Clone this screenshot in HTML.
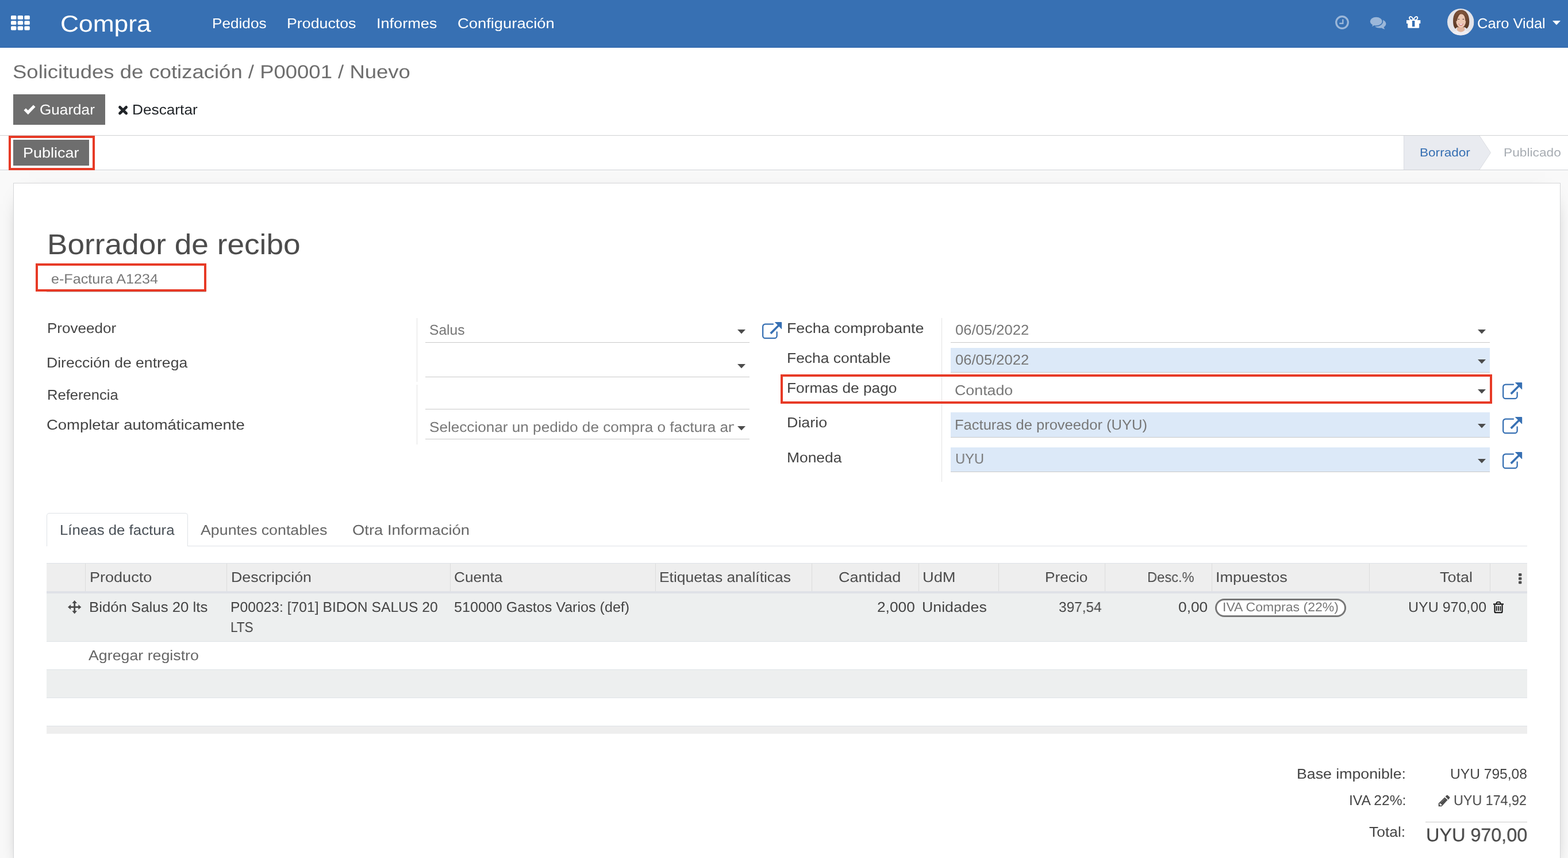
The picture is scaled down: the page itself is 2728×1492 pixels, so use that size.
<!DOCTYPE html>
<html lang="es"><head><meta charset="utf-8"><title>Compra - Borrador de recibo</title><style>
html,body{margin:0;padding:0;background:#fff}
body{width:2728px;height:1492px;overflow:hidden;position:relative;font-family:"Liberation Sans", sans-serif}
.b{position:absolute;display:block;margin:0;padding:0}
.t{position:absolute;display:block;margin:0;padding:0;white-space:pre;font-weight:400;text-decoration:none;font-family:"Liberation Sans", sans-serif;transform-origin:0 0;will-change:transform;text-rendering:geometricPrecision}
svg{overflow:visible}
</style></head>
<body>
<nav class="b" style="left:0;top:0;width:2728px;height:82px;background:#3770b3;border-bottom:1px solid #2861aa"><svg class="b" style="left:19.2px;top:26.6px" width="33" height="25.6" viewBox="0 0 33 25.600" ><rect x="0" y="0" width="9.4" height="6.800" rx="1.6" fill="#fff"/><rect x="11.7" y="0" width="9.4" height="6.800" rx="1.6" fill="#fff"/><rect x="23.4" y="0" width="9.4" height="6.800" rx="1.6" fill="#fff"/><rect x="0" y="9.3" width="9.4" height="6.800" rx="1.6" fill="#fff"/><rect x="11.7" y="9.3" width="9.4" height="6.800" rx="1.6" fill="#fff"/><rect x="23.4" y="9.3" width="9.4" height="6.800" rx="1.6" fill="#fff"/><rect x="0" y="18.6" width="9.4" height="6.800" rx="1.6" fill="#fff"/><rect x="11.7" y="18.6" width="9.4" height="6.800" rx="1.6" fill="#fff"/><rect x="23.4" y="18.6" width="9.4" height="6.800" rx="1.6" fill="#fff"/></svg><svg class="b" style="left:2322.8px;top:26.8px" width="24" height="24" viewBox="0 0 24 24" ><circle cx="12" cy="12" r="10.300" fill="none" stroke="#9bb7d9" stroke-width="3.2"/><path d="M13.300 6.500v7.300h-6" fill="none" stroke="#9bb7d9" stroke-width="2.400"/></svg><svg class="b" style="left:2382.6px;top:28.8px" width="28.4" height="22.2" viewBox="0 0 28.400 22.200" ><path d="M17.500 4.700c6 0 10.900 3.400 10.900 7.600 0 2.400-1.500 4.500-3.900 5.900.4 1.300 1.100 2.500 2.100 3.600-2.200-.3-4.200-1.100-5.800-2.400-1.100.3-2.200.4-3.300.4-6 0-10.900-3.400-10.900-7.500s4.900-7.600 10.900-7.600z" fill="#9bb7d9"/><path d="M11.250 0c6.200 0 11.250 3.600 11.250 8.100s-5.050 8.100-11.250 8.100c-1.100 0-2.200-.1-3.200-.3-1.700 1.200-3.700 2-5.900 2.200 1-1 1.700-2.200 2.100-3.500C1.600 13.100 0 10.700 0 8.100 0 3.600 5.050 0 11.250 0z" fill="#9bb7d9" stroke="#3770b3" stroke-width="1.500"/></svg><svg class="b" style="left:2446.8px;top:28px" width="24.3" height="20.7" viewBox="0 0 24.300 20.700" ><path d="M0 7h24.300v5.900H0z" fill="#fff"/><path d="M2.200 11h19.900v8.500q0 1.200-1.200 1.200H3.400q-1.200 0-1.200-1.200z" fill="#fff"/><path d="M9.900 7.800h4.500v10.600H9.900z" fill="#3770b3"/><path d="M12.150 7C10.500 2.500 8.300 .6 6.400 1.200 4.300 1.900 4.600 5.800 7.800 7zM12.150 7C13.800 2.500 16 .6 17.900 1.200c2.100.7 1.800 4.600-1.400 5.800z" fill="none" stroke="#fff" stroke-width="1.900"/></svg><svg class="b" style="left:2701px;top:36.2px" width="14" height="7.5" viewBox="0 0 14 7.5" ><path d="M0 0h14l-7 7.5z" fill="#fff"/></svg><svg class="b" style="left:2517.8px;top:15.4px" width="46.5" height="46.5" viewBox="0 0 46.500 46.500" ><defs><clipPath id="av"><circle cx="23.250" cy="23.250" r="23.250"/></clipPath><filter id="avb" x="-10%" y="-10%" width="120%" height="120%"><feGaussianBlur stdDeviation="0.55"/></filter><radialGradient id="avh" cx="50%" cy="30%" r="70%"><stop offset="0" stop-color="#8a5e42"/><stop offset="1" stop-color="#5d3a27"/></radialGradient></defs><g clip-path="url(#av)"><rect width="46.500" height="46.500" fill="#e4e4e9"/><g filter="url(#avb)"><path d="M6 47.500c1-5.500 5-8.500 11.500-10l12.500-.2c6 1.400 10 4.500 11 10.200z" fill="#efedf1"/><path d="M17.300 30l-.5 7.800q6.700 5.800 13.500 0L29.700 30z" fill="#dfb49d"/><path d="M10.200 25C9.200 12 13.800 2.200 24 2.200c9 0 14.800 8.500 14.200 21.800-.2 5-1.700 8.800-4.400 10.800l-3.300-2.600H17l-3 2.800c-2.300-2.300-3.500-6-3.800-10z" fill="url(#avh)"/><ellipse cx="23.800" cy="21.300" rx="8.500" ry="11.800" fill="#ecc8b3"/><path d="M14.700 22c-.3-8 2.500-13.500 10.300-14.600-3.600 2.200-6.700 6-8.200 14z" fill="#6e4630"/><path d="M33 22c.4-7.500-2-12.800-8-14.600 3.700 1.600 6 6 6.400 14.200z" fill="#6e4630"/><ellipse cx="19.800" cy="18.400" rx="1.600" ry=".7" fill="#5b4338"/><ellipse cx="27.900" cy="18.400" rx="1.600" ry=".7" fill="#5b4338"/><path d="M19.400 25.800q4.300 1 8.600 0-1.300 4-4.300 4t-4.300-4z" fill="#c96a6e"/><path d="M20.300 26.200q3.400.8 6.800 0-1.200 2.200-3.400 2.200t-3.400-2.200z" fill="#fff"/></g></g></svg><a class="t" style="left:105.3px;top:22.0px;font-size:40px;line-height:40px;transform:scaleX(1.1086);color:#fff">Compra</a>
<a class="t" style="left:368.9px;top:30.0px;font-size:24.6px;line-height:24.6px;transform:scaleX(1.0637);color:#fff">Pedidos</a>
<a class="t" style="left:499.1px;top:30.0px;font-size:24.6px;line-height:24.6px;transform:scaleX(1.0878);color:#fff">Productos</a>
<a class="t" style="left:655.2px;top:30.0px;font-size:24.6px;line-height:24.6px;transform:scaleX(1.1009);color:#fff">Informes</a>
<a class="t" style="left:795.9px;top:30.0px;font-size:24.6px;line-height:24.6px;transform:scaleX(1.1123);color:#fff">Configuración</a>
<span class="t" style="left:2570.2px;top:30.0px;font-size:24.6px;line-height:24.6px;transform:scaleX(1.0386);color:#fff">Caro Vidal</span></nav>
<header class="b" style="left:0;top:83px;width:2728px;height:152px;background:#fff;border-bottom:1px solid #cfd1d4"></header><div class="b btn" style="left:23px;top:164px;width:160px;height:53px;background:#6e6e6e"></div><svg class="b" style="left:41px;top:181.2px" width="21" height="17" viewBox="0 0 21 17" ><path d="M2.200 9l5.600 5.600L18.800 3.200" fill="none" stroke="#fff" stroke-width="5"/></svg><svg class="b" style="left:206px;top:183.8px" width="16.2" height="15.4" viewBox="0 0 16.200 15.400" ><path d="M2.600 2.400l11 10.600M13.600 2.400l-11 10.600" fill="none" stroke="#212529" stroke-width="4.900" stroke-linecap="round"/></svg><span class="t" style="left:22.1px;top:109.0px;font-size:32.6px;line-height:32.6px;transform:scaleX(1.1204);color:#6e6e6e">Solicitudes de cotización / P00001 / Nuevo</span>
<span class="t" style="left:69.4px;top:180.0px;font-size:24.6px;line-height:24.6px;transform:scaleX(1.0623);color:#fff">Guardar</span>
<span class="t" style="left:229.6px;top:180.0px;font-size:24.6px;line-height:24.6px;transform:scaleX(1.0666);color:#212529">Descartar</span>
<section><div class="b" style="left:0px;top:236px;width:2728px;height:59px;background:#fff;border-bottom:1px solid #cfd1d6"></div><svg class="b" style="left:2442px;top:236px" width="152" height="59" viewBox="0 0 152 59" ><path d="M.5 0v59h131.500l19.500-29.500L132 0z" fill="#e9ebf0"/><path d="M.5 0v59M132 0l19.500 29.500L132 59" fill="none" stroke="#dadce1" stroke-width="1"/></svg><div class="b btn" style="left:23px;top:243px;width:132px;height:45px;background:#6e6e6e"></div><span class="t" style="left:39.6px;top:255.0px;font-size:24.6px;line-height:24.6px;transform:scaleX(1.0971);color:#fff">Publicar</span>
<span class="t" style="left:2470.4px;top:256.0px;font-size:20.3px;line-height:20.3px;transform:scaleX(1.1132);color:#3770b3">Borrador</span>
<span class="t" style="left:2615.5px;top:256.0px;font-size:20.3px;line-height:20.3px;transform:scaleX(1.1211);color:#a8adb3">Publicado</span></section>
<div class="b" style="left:0px;top:296px;width:2728px;height:1196px;background:#f9f9f9"></div><div class="b" style="left:23px;top:318px;width:2692px;height:1200px;background:#fff;border:1px solid #d5d6d8;box-shadow:0 9px 36px -27px #000;box-sizing:border-box"></div>
<main><div class="b" style="left:81px;top:507px;width:277px;height:1px;background:#c9c9c9"></div><div class="b" style="left:740px;top:595px;width:564px;height:1px;background:#c9c9c9"></div><div class="b" style="left:740px;top:655px;width:564px;height:1px;background:#c9c9c9"></div><div class="b" style="left:740px;top:711px;width:564px;height:1px;background:#c9c9c9"></div><div class="b" style="left:740px;top:763px;width:564px;height:1px;background:#c9c9c9"></div><div class="b" style="left:725px;top:553px;width:1px;height:111px;background:#e2e2e2"></div><div class="b" style="left:725px;top:669px;width:1px;height:104px;background:#e2e2e2"></div><svg class="b" style="left:1283px;top:573px" width="14" height="7.5" viewBox="0 0 14 7.5" ><path d="M0 0h14l-7 7.5z" fill="#4c4c4c"/></svg><svg class="b" style="left:1283px;top:633px" width="14" height="7.5" viewBox="0 0 14 7.5" ><path d="M0 0h14l-7 7.5z" fill="#4c4c4c"/></svg><svg class="b" style="left:1283px;top:741px" width="14" height="7.5" viewBox="0 0 14 7.5" ><path d="M0 0h14l-7 7.5z" fill="#4c4c4c"/></svg><svg class="b" style="left:1325.7px;top:560.4px" width="34.2" height="29.3" viewBox="0 0 34.2 29.3" ><path d="M19 3.650H5.400A4.250 4.250 0 0 0 1.150 7.900V23.900A4.250 4.250 0 0 0 5.400 28.150H21.400A4.250 4.250 0 0 0 25.650 23.900V17.500" fill="none" stroke="#3770b3" stroke-width="2.3" stroke-linecap="round"/><path d="M22.600 0H33.200Q34.200 0 34.200 1V11.600Q34.200 12.600 33.400 11.900L29.300 7.800L16 21.300L13.500 18.600L26.900 5.300L22.300 .8Q21.700 0 22.600 0z" fill="#3770b3"/></svg><div class="b" style="left:1638px;top:553px;width:1px;height:285px;background:#e2e2e2"></div><div class="b" style="left:1654px;top:595px;width:938px;height:1px;background:#c9c9c9"></div><div class="b" style="left:1654px;top:605px;width:938px;height:42px;background:#dce9f8;border-bottom:1px solid #c9c9c9"></div><div class="b" style="left:1654px;top:700px;width:938px;height:1px;background:#c9c9c9"></div><div class="b" style="left:1654px;top:717px;width:938px;height:43px;background:#dce9f8;border-bottom:1px solid #c9c9c9"></div><div class="b" style="left:1654px;top:778px;width:938px;height:42px;background:#dce9f8;border-bottom:1px solid #c9c9c9"></div><svg class="b" style="left:2571px;top:573px" width="14" height="7.5" viewBox="0 0 14 7.5" ><path d="M0 0h14l-7 7.5z" fill="#4c4c4c"/></svg><svg class="b" style="left:2571px;top:625px" width="14" height="7.5" viewBox="0 0 14 7.5" ><path d="M0 0h14l-7 7.5z" fill="#4c4c4c"/></svg><svg class="b" style="left:2571px;top:677px" width="14" height="7.5" viewBox="0 0 14 7.5" ><path d="M0 0h14l-7 7.5z" fill="#4c4c4c"/></svg><svg class="b" style="left:2571px;top:737px" width="14" height="7.5" viewBox="0 0 14 7.5" ><path d="M0 0h14l-7 7.5z" fill="#4c4c4c"/></svg><svg class="b" style="left:2571px;top:798px" width="14" height="7.5" viewBox="0 0 14 7.5" ><path d="M0 0h14l-7 7.5z" fill="#4c4c4c"/></svg><svg class="b" style="left:2613.5px;top:664.6px" width="34.2" height="29.3" viewBox="0 0 34.2 29.3" ><path d="M19 3.650H5.400A4.250 4.250 0 0 0 1.150 7.900V23.900A4.250 4.250 0 0 0 5.400 28.150H21.400A4.250 4.250 0 0 0 25.650 23.900V17.500" fill="none" stroke="#3770b3" stroke-width="2.3" stroke-linecap="round"/><path d="M22.600 0H33.200Q34.200 0 34.200 1V11.600Q34.200 12.600 33.400 11.900L29.300 7.800L16 21.300L13.500 18.600L26.900 5.300L22.300 .8Q21.700 0 22.600 0z" fill="#3770b3"/></svg><svg class="b" style="left:2613.5px;top:725px" width="34.2" height="29.3" viewBox="0 0 34.2 29.3" ><path d="M19 3.650H5.400A4.250 4.250 0 0 0 1.150 7.900V23.900A4.250 4.250 0 0 0 5.400 28.150H21.400A4.250 4.250 0 0 0 25.650 23.900V17.500" fill="none" stroke="#3770b3" stroke-width="2.3" stroke-linecap="round"/><path d="M22.600 0H33.200Q34.200 0 34.200 1V11.600Q34.200 12.600 33.400 11.900L29.300 7.800L16 21.300L13.500 18.600L26.900 5.300L22.300 .8Q21.700 0 22.600 0z" fill="#3770b3"/></svg><svg class="b" style="left:2613.5px;top:785.6px" width="34.2" height="29.3" viewBox="0 0 34.2 29.3" ><path d="M19 3.650H5.400A4.250 4.250 0 0 0 1.150 7.900V23.900A4.250 4.250 0 0 0 5.400 28.150H21.400A4.250 4.250 0 0 0 25.650 23.900V17.500" fill="none" stroke="#3770b3" stroke-width="2.3" stroke-linecap="round"/><path d="M22.600 0H33.200Q34.200 0 34.200 1V11.600Q34.200 12.600 33.400 11.900L29.300 7.800L16 21.300L13.500 18.600L26.900 5.300L22.300 .8Q21.700 0 22.600 0z" fill="#3770b3"/></svg><div class="b" style="left:748px;top:726px;width:529px;height:34px;overflow:hidden"><span class="t" style="left:-1.4px;top:6px;font-size:24.6px;line-height:24.6px;transform:scaleX(1.0625);color:#777">Seleccionar un pedido de compra o factura anterior</span></div><div class="b" style="left:81px;top:949px;width:2576px;height:1px;background:#dee2e6"></div><div class="b" style="left:81px;top:892px;width:246px;height:58px;background:#fff;border:1px solid #dee2e6;border-bottom:0;border-radius:5px 5px 0 0;box-sizing:border-box"></div><h1 class="t" style="left:81.6px;top:401.0px;font-size:49.8px;line-height:49.8px;transform:scaleX(1.0683);color:#4c4c4c">Borrador de recibo</h1>
<span class="t" style="left:88.5px;top:474.0px;font-size:23.8px;line-height:23.8px;transform:scaleX(1.0573);color:#777">e-Factura A1234</span>
<label class="t" style="left:81.5px;top:560.0px;font-size:24.6px;line-height:24.6px;transform:scaleX(1.0587);color:#444">Proveedor</label>
<label class="t" style="left:81.4px;top:620.0px;font-size:24.6px;line-height:24.6px;transform:scaleX(1.0805);color:#444">Dirección de entrega</label>
<label class="t" style="left:81.5px;top:676.0px;font-size:24.6px;line-height:24.6px;transform:scaleX(1.0403);color:#444">Referencia</label>
<label class="t" style="left:81.1px;top:728.0px;font-size:24.6px;line-height:24.6px;transform:scaleX(1.1159);color:#444">Completar automáticamente</label>
<label class="t" style="left:1369.2px;top:560.0px;font-size:24.6px;line-height:24.6px;transform:scaleX(1.0899);color:#444">Fecha comprobante</label>
<label class="t" style="left:1369.2px;top:612.0px;font-size:24.6px;line-height:24.6px;transform:scaleX(1.0741);color:#444">Fecha contable</label>
<label class="t" style="left:1369.2px;top:664.0px;font-size:24.6px;line-height:24.6px;transform:scaleX(1.0689);color:#444">Formas de pago</label>
<label class="t" style="left:1369.2px;top:724.0px;font-size:24.6px;line-height:24.6px;transform:scaleX(1.0922);color:#444">Diario</label>
<label class="t" style="left:1369.2px;top:785.0px;font-size:24.6px;line-height:24.6px;transform:scaleX(1.0738);color:#444">Moneda</label>
<span class="t" style="left:747.4px;top:563.0px;font-size:24.6px;line-height:24.6px;transform:scaleX(0.9954);color:#777">Salus</span>
<span class="t" style="left:1661.6px;top:563.0px;font-size:24.6px;line-height:24.6px;transform:scaleX(1.0420);color:#777">06/05/2022</span>
<span class="t" style="left:1661.6px;top:615.0px;font-size:24.6px;line-height:24.6px;transform:scaleX(1.0420);color:#777">06/05/2022</span>
<span class="t" style="left:1661.0px;top:668.0px;font-size:24.6px;line-height:24.6px;transform:scaleX(1.0890);color:#777">Contado</span>
<span class="t" style="left:1661.3px;top:728.0px;font-size:24.6px;line-height:24.6px;transform:scaleX(1.0383);color:#777">Facturas de proveedor (UYU)</span>
<span class="t" style="left:1661.6px;top:787.0px;font-size:24.6px;line-height:24.6px;transform:scaleX(0.9623);color:#777">UYU</span>
<a class="t" style="left:104.2px;top:911.0px;font-size:24.6px;line-height:24.6px;transform:scaleX(1.0501);color:#495057">Líneas de factura</a>
<a class="t" style="left:349.2px;top:911.0px;font-size:24.6px;line-height:24.6px;transform:scaleX(1.0890);color:#666">Apuntes contables</a>
<a class="t" style="left:613.1px;top:911.0px;font-size:24.6px;line-height:24.6px;transform:scaleX(1.1140);color:#666">Otra Información</a>
<section><div class="b" style="left:81px;top:979px;width:2576px;height:49px;background:#eeeeee;border-top:1px solid #dee2e6;box-sizing:border-box"></div><div class="b" style="left:148px;top:980px;width:1px;height:50px;background:#dcdcdc"></div><div class="b" style="left:394px;top:980px;width:1px;height:50px;background:#dcdcdc"></div><div class="b" style="left:783px;top:980px;width:1px;height:50px;background:#dcdcdc"></div><div class="b" style="left:1140px;top:980px;width:1px;height:50px;background:#dcdcdc"></div><div class="b" style="left:1412px;top:980px;width:1px;height:50px;background:#dcdcdc"></div><div class="b" style="left:1598px;top:980px;width:1px;height:50px;background:#dcdcdc"></div><div class="b" style="left:1737px;top:980px;width:1px;height:50px;background:#dcdcdc"></div><div class="b" style="left:1922px;top:980px;width:1px;height:50px;background:#dcdcdc"></div><div class="b" style="left:2108px;top:980px;width:1px;height:50px;background:#dcdcdc"></div><div class="b" style="left:2382px;top:980px;width:1px;height:50px;background:#dcdcdc"></div><div class="b" style="left:2592px;top:980px;width:1px;height:50px;background:#dcdcdc"></div><div class="b" style="left:81px;top:1028px;width:2576px;height:4px;background:#dfe1e7"></div><div class="b" style="left:81px;top:1032px;width:2576px;height:83px;background:#edefef"></div><div class="b" style="left:81px;top:1115px;width:2576px;height:1px;background:#dee2e6"></div><div class="b" style="left:81px;top:1164px;width:2576px;height:50px;background:#edefef;border-top:1px solid #dee2e6;border-bottom:1px solid #dee2e6;box-sizing:border-box"></div><div class="b" style="left:81px;top:1262px;width:2576px;height:14px;background:#eeeeee;border-top:1px solid #dee2e6;box-sizing:border-box"></div><div class="b" style="left:2114px;top:1041px;width:228px;height:32px;background:#fff;border:3px solid #777;border-radius:16px;box-sizing:border-box"></div><svg class="b" style="left:118.2px;top:1044px" width="23.4" height="23.4" viewBox="0 0 23 23" ><path d="M11.500 0l4.300 5h-2.900v5.100H18V7.200l5 4.300-5 4.300v-2.900h-5.100V18h2.900l-4.300 5-4.300-5h2.900v-5.100H5v2.900l-5-4.300 5-4.300v2.900h5.100V5H7.200z" fill="#4c4c4c"/></svg><svg class="b" style="left:2642.4px;top:996.8px" width="5.4" height="18.2" viewBox="0 0 5.400 18.200" ><rect x="0" y="0" width="5.400" height="4.800" rx="1.300" fill="#4c4c4c"/><rect x="0" y="6.700" width="5.400" height="4.800" rx="1.300" fill="#4c4c4c"/><rect x="0" y="13.400" width="5.400" height="4.800" rx="1.300" fill="#4c4c4c"/></svg><svg class="b" style="left:2598.3px;top:1046px" width="18" height="20.2" viewBox="0 0 18 20.200" ><path d="M0 3.500h18v2.100H0z" fill="#111"/><path d="M5 3.700l1.200-2.200q.4-.7 1.200-.7h3.200q.8 0 1.200.7L13 3.700" fill="none" stroke="#111" stroke-width="1.800"/><path d="M2.500 5.500v12q0 1.800 1.800 1.800h9.400q1.800 0 1.800-1.800v-12" fill="none" stroke="#111" stroke-width="2.100"/><path d="M5.700 8v8.300M9 8v8.300M12.300 8v8.300" fill="none" stroke="#111" stroke-width="1.700"/></svg><span class="t" style="left:156.0px;top:993.0px;font-size:24.6px;line-height:24.6px;transform:scaleX(1.0993);color:#4c4c4c">Producto</span>
<span class="t" style="left:401.8px;top:993.0px;font-size:24.6px;line-height:24.6px;transform:scaleX(1.0898);color:#4c4c4c">Descripción</span>
<span class="t" style="left:790.3px;top:993.0px;font-size:24.6px;line-height:24.6px;transform:scaleX(1.0637);color:#4c4c4c">Cuenta</span>
<span class="t" style="left:1147.0px;top:993.0px;font-size:24.6px;line-height:24.6px;transform:scaleX(1.0735);color:#4c4c4c">Etiquetas analíticas</span>
<span class="t" style="left:1459.4px;top:993.0px;font-size:24.6px;line-height:24.6px;transform:scaleX(1.0996);color:#4c4c4c">Cantidad</span>
<span class="t" style="left:1605.1px;top:993.0px;font-size:24.6px;line-height:24.6px;transform:scaleX(1.1088);color:#4c4c4c">UdM</span>
<span class="t" style="left:1818.0px;top:993.0px;font-size:24.6px;line-height:24.6px;transform:scaleX(1.0664);color:#4c4c4c">Precio</span>
<span class="t" style="left:1996.1px;top:993.0px;font-size:24.6px;line-height:24.6px;transform:scaleX(0.9638);color:#4c4c4c">Desc.%</span>
<span class="t" style="left:2115.3px;top:993.0px;font-size:24.6px;line-height:24.6px;transform:scaleX(1.0995);color:#4c4c4c">Impuestos</span>
<span class="t" style="left:2504.7px;top:993.0px;font-size:24.6px;line-height:24.6px;transform:scaleX(1.0954);color:#4c4c4c">Total</span>
<span class="t" style="left:154.8px;top:1045.0px;font-size:24.6px;line-height:24.6px;transform:scaleX(1.0478);color:#444">Bidón Salus 20 lts</span>
<span class="t" style="left:400.8px;top:1045.0px;font-size:24.6px;line-height:24.6px;transform:scaleX(1.0031);color:#444">P00023: [701] BIDON SALUS 20</span>
<span class="t" style="left:400.9px;top:1080.0px;font-size:24.6px;line-height:24.6px;transform:scaleX(0.9167);color:#444">LTS</span>
<span class="t" style="left:789.6px;top:1045.0px;font-size:24.6px;line-height:24.6px;transform:scaleX(1.0209);color:#444">510000 Gastos Varios (def)</span>
<span class="t" style="left:1525.9px;top:1045.0px;font-size:24.6px;line-height:24.6px;transform:scaleX(1.0681);color:#444">2,000</span>
<span class="t" style="left:1604.2px;top:1045.0px;font-size:24.6px;line-height:24.6px;transform:scaleX(1.0856);color:#444">Unidades</span>
<span class="t" style="left:1841.8px;top:1045.0px;font-size:24.6px;line-height:24.6px;transform:scaleX(0.9924);color:#444">397,54</span>
<span class="t" style="left:2050.4px;top:1045.0px;font-size:24.6px;line-height:24.6px;transform:scaleX(1.0693);color:#444">0,00</span>
<span class="t" style="left:2449.8px;top:1045.0px;font-size:24.6px;line-height:24.6px;transform:scaleX(1.0158);color:#444">UYU 970,00</span>
<span class="t" style="left:2127.2px;top:1045.0px;font-size:22px;line-height:22px;transform:scaleX(1.0476);color:#777">IVA Compras (22%)</span>
<a class="t" style="left:154.2px;top:1129.0px;font-size:24.6px;line-height:24.6px;transform:scaleX(1.0880);color:#666">Agregar registro</a></section>
<section><div class="b" style="left:2480px;top:1429px;width:177px;height:1px;background:#c9c9c9"></div><svg class="b" style="left:2501.9px;top:1382px" width="21.3" height="20.74" viewBox="400 400 750 730" ><path d="M425 930L800 555L985 720L620 1110L425 1115Z" fill="#4c4c4c"/><path d="M478 962L522 918L638 1012L588 1062Q545 1072 512 1030Z" fill="#fff"/><path d="M578 872L805 648" fill="none" stroke="#fff" stroke-width="22" stroke-dasharray="22 12"/><path d="M845 505L932 428Q955 410 980 430L1108 545Q1130 568 1114 592L1030 700Z" fill="#4c4c4c"/></svg><span class="t" style="left:2255.6px;top:1335.0px;font-size:24.6px;line-height:24.6px;transform:scaleX(1.0855);color:#444">Base imponible:</span>
<span class="t" style="left:2522.7px;top:1335.0px;font-size:24.6px;line-height:24.6px;transform:scaleX(0.9993);color:#444">UYU 795,08</span>
<span class="t" style="left:2346.5px;top:1381.0px;font-size:24.6px;line-height:24.6px;transform:scaleX(0.9957);color:#444">IVA 22%:</span>
<span class="t" style="left:2528.6px;top:1381.0px;font-size:24.6px;line-height:24.6px;transform:scaleX(0.9474);color:#444">UYU 174,92</span>
<span class="t" style="left:2382.4px;top:1436.0px;font-size:24.6px;line-height:24.6px;transform:scaleX(1.0745);color:#444">Total:</span>
<span class="t" style="left:2480.6px;top:1436.0px;font-size:32.5px;line-height:32.5px;transform:scaleX(0.9954);color:#444;-webkit-text-stroke:0.2px #444">UYU 970,00</span></section></main>
<div class="b" style="left:15px;top:236px;width:150px;height:60px;border:4px solid #e73a26;box-sizing:border-box"></div><div class="b" style="left:62px;top:458px;width:297px;height:49px;border:4px solid #e73a26;box-sizing:border-box"></div><div class="b" style="left:1358px;top:651px;width:1238px;height:51px;border:4px solid #e73a26;box-sizing:border-box"></div>
</body></html>
